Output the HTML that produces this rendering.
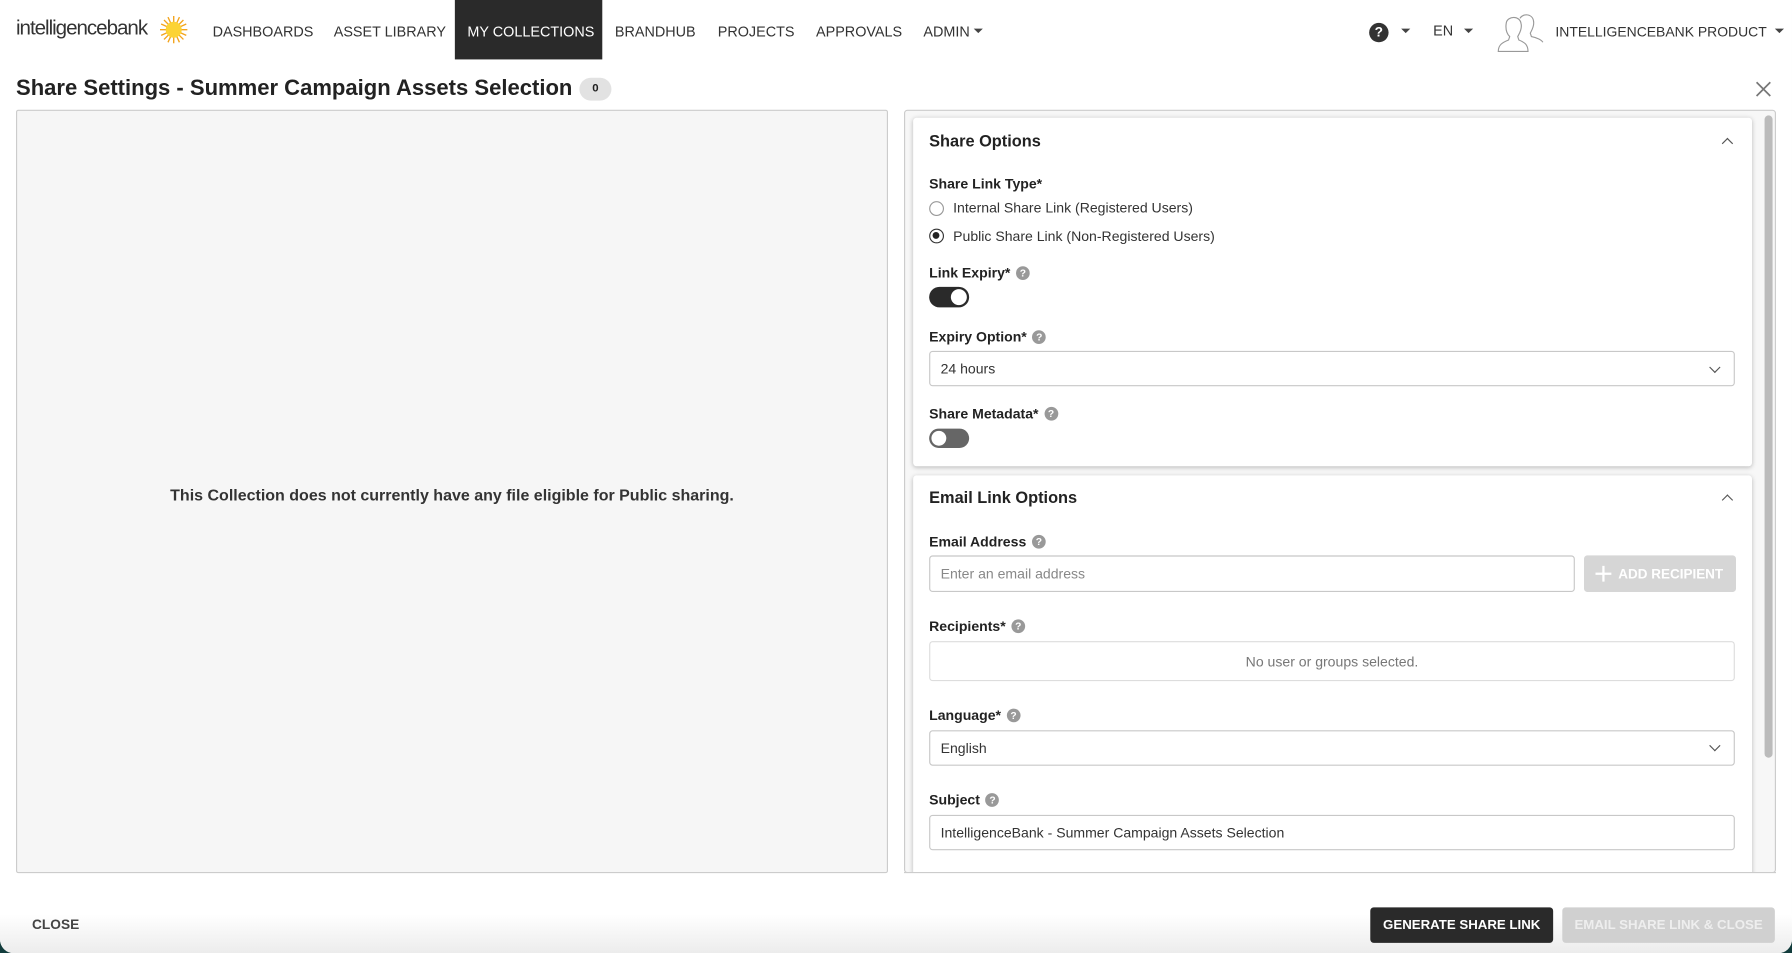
<!DOCTYPE html>
<html><head><meta charset="utf-8"><style>
*{box-sizing:border-box;margin:0;padding:0}
html,body{width:1792px;height:953px;overflow:hidden;background:#123c3c;font-family:"Liberation Sans",Arial,sans-serif;color:#222}
#w{position:absolute;left:0;top:0;width:1568px;height:834px;transform:scale(1.142857);transform-origin:0 0;background:#fff;border-radius:0 0 12px 12px;overflow:hidden}
.a{position:absolute;white-space:nowrap}
.nav{font-size:12.6px;color:#333;top:21px}
.lbl{font-size:12.3px;font-weight:bold;color:#222}
.q{display:inline-block;width:12px;height:12px;border-radius:50%;background:#999;color:#fff;font-size:9px;line-height:12px;text-align:center;font-weight:bold;vertical-align:1px;margin-left:5px}
.inp{border:1px solid #c8c8c8;border-radius:3px;background:#fff;font-size:12.3px;color:#333;padding-left:9px;display:flex;align-items:center}
.card{background:#fff;border-radius:3px;box-shadow:0 1px 4px rgba(0,0,0,.25)}
.chev{width:7px;height:7px;border-left:1.5px solid #555;border-top:1.5px solid #555;transform:rotate(45deg)}
.dchev{width:7px;height:7px;border-right:1.5px solid #555;border-bottom:1.5px solid #555;transform:rotate(45deg)}
.car{width:0;height:0;border-left:4px solid transparent;border-right:4px solid transparent;border-top:4px solid #444}
</style></head><body><div id="w">
<div class="a" style="left:14px;top:14px;font-size:18px;color:#333;letter-spacing:-0.9px">intelligencebank</div>
<svg class="a" style="left:140px;top:14px" width="24" height="24" viewBox="0 0 24 24"><g stroke="#f3a41c" stroke-width="1.2"><path d="M12 0V24M0 12H24M3.5 3.5L20.5 20.5M20.5 3.5L3.5 20.5M7 1L17 23M17 1L7 23M1 7L23 17M1 17L23 7"/></g><circle cx="12" cy="12" r="7" fill="#fcd335"/></svg>
<div class="a nav" style="left:186px">DASHBOARDS</div>
<div class="a nav" style="left:292px">ASSET LIBRARY</div>
<div class="a" style="left:398px;top:0;width:129px;height:52px;background:#2a2a2a"></div>
<div class="a nav" style="left:409px;color:#fff">MY COLLECTIONS</div>
<div class="a nav" style="left:538px">BRANDHUB</div>
<div class="a nav" style="left:628px">PROJECTS</div>
<div class="a nav" style="left:714px">APPROVALS</div>
<div class="a nav" style="left:808px">ADMIN</div>
<div class="a car" style="left:852px;top:25px"></div>
<div class="a" style="left:1198px;top:20px;width:17px;height:17px;border-radius:50%;background:#333;color:#fff;font-size:12px;font-weight:bold;text-align:center;line-height:17px">?</div>
<div class="a car" style="left:1226px;top:25px"></div>
<div class="a nav" style="left:1254px;top:20px">EN</div>
<div class="a car" style="left:1281px;top:25px"></div>
<svg class="a" style="left:1310px;top:10px" width="42" height="40" viewBox="0 0 42 40" fill="none" stroke="#999" stroke-width="1"><path d="M20 6c3-5 12-4 12 4 0 4-2 7-3 9l1 3c5 1 9 3 10 5M8 10c1-6 12-7 13 1 1 5-2 9-3 11l1 3c5 2 8 4 8 10H1c0-6 4-8 9-10l1-3c-2-2-4-6-3-12z"/></svg>
<div class="a nav" style="left:1361px;font-size:12.2px">INTELLIGENCEBANK PRODUCT</div>
<div class="a car" style="left:1553px;top:25px"></div>

<div class="a" style="left:14px;top:67px;font-size:19.3px;font-weight:bold;color:#222">Share Settings - Summer Campaign Assets Selection</div>
<div class="a" style="left:507px;top:68px;width:28px;height:20px;border-radius:10px;background:#e2e2e2;font-size:10px;font-weight:bold;text-align:center;line-height:20px">0</div>
<svg class="a" style="left:1536px;top:71px" width="14" height="14"><path d="M1 1L13 13M13 1L1 13" stroke="#777" stroke-width="1.5"/></svg>

<div class="a" style="left:14px;top:96px;width:763px;height:668px;background:#f6f6f6;border:1px solid #ccc;border-radius:2px"></div>
<div class="a" style="left:14px;top:425px;width:763px;text-align:center;font-size:14px;font-weight:bold;color:#333">This Collection does not currently have any file eligible for Public sharing.</div>

<div class="a" style="left:791px;top:96px;width:763px;height:668px;border:1px solid #ccc;border-radius:3px;background:#f7f7f7;overflow:hidden">
<div class="a" style="left:752px;top:4px;width:7px;height:562px;background:#bbb;border-radius:4px"></div>
</div>

<div class="a card" style="left:799px;top:103px;width:734px;height:305px"></div>
<div class="a" style="left:813px;top:116px;font-size:14.3px;font-weight:bold">Share Options</div>
<div class="a chev" style="left:1508px;top:122px"></div>
<div class="a lbl" style="left:813px;top:154px">Share Link Type*</div>
<div class="a" style="left:813px;top:176px;width:13px;height:13px;border:1px solid #999;border-radius:50%"></div>
<div class="a" style="left:834px;top:175px;font-size:12.3px;color:#333">Internal Share Link (Registered Users)</div>
<div class="a" style="left:813px;top:200px;width:13px;height:13px;border:1.5px solid #333;border-radius:50%"><div style="width:6px;height:6px;margin:2px;border-radius:50%;background:#222"></div></div>
<div class="a" style="left:834px;top:200px;font-size:12.3px;color:#333">Public Share Link (Non-Registered Users)</div>
<div class="a lbl" style="left:813px;top:232px">Link Expiry*<span class="q">?</span></div>
<div class="a" style="left:813px;top:251px;width:35px;height:18px;border-radius:9px;background:#2a2a2a"><div style="position:absolute;right:2px;top:2px;width:14px;height:14px;border-radius:50%;background:#fff"></div></div>
<div class="a lbl" style="left:813px;top:288px">Expiry Option*<span class="q">?</span></div>
<div class="a inp" style="left:813px;top:307px;width:705px;height:31px">24 hours</div>
<div class="a dchev" style="left:1497px;top:318px"></div>
<div class="a lbl" style="left:813px;top:355px">Share Metadata*<span class="q">?</span></div>
<div class="a" style="left:813px;top:375px;width:35px;height:17px;border-radius:9px;background:#666"><div style="position:absolute;left:2px;top:2px;width:13px;height:13px;border-radius:50%;background:#fff"></div></div>

<div class="a card" style="left:799px;top:416px;width:734px;height:360px"></div>
<div class="a" style="left:813px;top:428px;font-size:14.3px;font-weight:bold">Email Link Options</div>
<div class="a chev" style="left:1508px;top:434px"></div>
<div class="a lbl" style="left:813px;top:467px">Email Address<span class="q">?</span></div>
<div class="a inp" style="left:813px;top:486px;width:565px;height:32px;color:#888">Enter an email address</div>
<div class="a" style="left:1386px;top:486px;width:133px;height:32px;background:#d6d6d6;border-radius:3px;color:#fff;font-size:11.8px;font-weight:bold;line-height:32px;padding-left:30px">ADD RECIPIENT</div>
<svg class="a" style="left:1396px;top:495px" width="14" height="14"><path d="M7 0V14M0 7H14" stroke="#fff" stroke-width="2"/></svg>
<div class="a lbl" style="left:813px;top:541px">Recipients*<span class="q">?</span></div>
<div class="a" style="left:813px;top:561px;width:705px;height:35px;border:1px solid #ddd;border-radius:3px;text-align:center;line-height:34px;font-size:12.3px;color:#777">No user or groups selected.</div>
<div class="a lbl" style="left:813px;top:619px">Language*<span class="q">?</span></div>
<div class="a inp" style="left:813px;top:639px;width:705px;height:31px">English</div>
<div class="a dchev" style="left:1497px;top:649px"></div>
<div class="a lbl" style="left:813px;top:693px">Subject<span class="q">?</span></div>
<div class="a inp" style="left:813px;top:713px;width:705px;height:31px">IntelligenceBank - Summer Campaign Assets Selection</div>
<div class="a" style="left:791px;top:763px;width:763px;height:80px;background:#fff;border-top:1px solid #ccc"></div>

<div class="a" style="left:0;top:800px;width:1568px;height:34px;background:linear-gradient(#fff,#ececec)"></div>
<div class="a" style="left:28px;top:802px;font-size:12px;font-weight:bold;color:#444">CLOSE</div>
<div class="a" style="left:1199px;top:794px;width:160px;height:31px;background:#2a2a2a;border-radius:3px;color:#fff;font-size:11.6px;font-weight:bold;text-align:center;line-height:31px">GENERATE SHARE LINK</div>
<div class="a" style="left:1367px;top:794px;width:186px;height:31px;background:#d0d0d0;border-radius:3px;color:#eee;font-size:11.6px;font-weight:bold;text-align:center;line-height:31px">EMAIL SHARE LINK &amp; CLOSE</div>
</div></body></html>
